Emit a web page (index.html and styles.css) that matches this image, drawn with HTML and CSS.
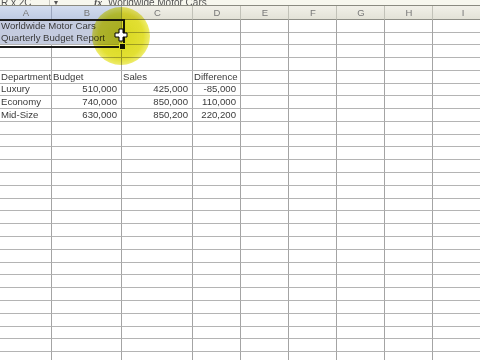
FILE: index.html
```html
<!DOCTYPE html>
<html>
<head>
<meta charset="utf-8">
<link rel="stylesheet" href="styles.css">
</head>
<body>
<div class="fbar">
  <span class="namebox">R x 2C</span>
  <span class="arrow">▾</span>
  <span class="fx">fx</span>
  <span class="ftext">Worldwide Motor Cars</span>
</div>
<div class="sheet">
  <div class="row head">
    <i class="hsel">A</i><i class="hsel">B</i><i>C</i><i>D</i><i>E</i><i>F</i><i>G</i><i>H</i><i>I</i>
  </div>
  <div class="row"><i class="sel txt">Worldwide Motor Cars</i><i class="sel"></i><i></i><i></i><i></i><i></i><i></i><i></i><i></i></div>
  <div class="row"><i class="sel txt">Quarterly Budget Report</i><i class="sel"></i><i></i><i></i><i></i><i></i><i></i><i></i><i></i></div>
  <div class="row"><i></i><i></i><i></i><i></i><i></i><i></i><i></i><i></i><i></i></div>
  <div class="row"><i></i><i></i><i></i><i></i><i></i><i></i><i></i><i></i><i></i></div>
  <div class="row"><i>Department</i><i>Budget</i><i>Sales</i><i>Difference</i><i></i><i></i><i></i><i></i><i></i></div>
  <div class="row"><i>Luxury</i><i class="num">510,000</i><i class="num">425,000</i><i class="num">-85,000</i><i></i><i></i><i></i><i></i><i></i></div>
  <div class="row"><i>Economy</i><i class="num">740,000</i><i class="num">850,000</i><i class="num">110,000</i><i></i><i></i><i></i><i></i><i></i></div>
  <div class="row"><i>Mid-Size</i><i class="num">630,000</i><i class="num">850,200</i><i class="num">220,200</i><i></i><i></i><i></i><i></i><i></i></div>
  <div class="row"><i></i><i></i><i></i><i></i><i></i><i></i><i></i><i></i><i></i></div>
  <div class="row"><i></i><i></i><i></i><i></i><i></i><i></i><i></i><i></i><i></i></div>
  <div class="row"><i></i><i></i><i></i><i></i><i></i><i></i><i></i><i></i><i></i></div>
  <div class="row"><i></i><i></i><i></i><i></i><i></i><i></i><i></i><i></i><i></i></div>
  <div class="row"><i></i><i></i><i></i><i></i><i></i><i></i><i></i><i></i><i></i></div>
  <div class="row"><i></i><i></i><i></i><i></i><i></i><i></i><i></i><i></i><i></i></div>
  <div class="row"><i></i><i></i><i></i><i></i><i></i><i></i><i></i><i></i><i></i></div>
  <div class="row"><i></i><i></i><i></i><i></i><i></i><i></i><i></i><i></i><i></i></div>
  <div class="row"><i></i><i></i><i></i><i></i><i></i><i></i><i></i><i></i><i></i></div>
  <div class="row"><i></i><i></i><i></i><i></i><i></i><i></i><i></i><i></i><i></i></div>
  <div class="row"><i></i><i></i><i></i><i></i><i></i><i></i><i></i><i></i><i></i></div>
  <div class="row"><i></i><i></i><i></i><i></i><i></i><i></i><i></i><i></i><i></i></div>
  <div class="row"><i></i><i></i><i></i><i></i><i></i><i></i><i></i><i></i><i></i></div>
  <div class="row"><i></i><i></i><i></i><i></i><i></i><i></i><i></i><i></i><i></i></div>
  <div class="row"><i></i><i></i><i></i><i></i><i></i><i></i><i></i><i></i><i></i></div>
  <div class="row"><i></i><i></i><i></i><i></i><i></i><i></i><i></i><i></i><i></i></div>
  <div class="row"><i></i><i></i><i></i><i></i><i></i><i></i><i></i><i></i><i></i></div>
  <div class="row"><i></i><i></i><i></i><i></i><i></i><i></i><i></i><i></i><i></i></div>
  <div class="row"><i></i><i></i><i></i><i></i><i></i><i></i><i></i><i></i><i></i></div>

  <div class="selbox"></div>
  <div class="handle"></div>
  <div class="glow"></div>
  <svg class="cursor" width="14" height="14" viewBox="0 0 14 14">
    <path d="M5 1h4v4h4v4h-4v4h-4v-4h-4v-4h4z" fill="#fff" stroke="#000" stroke-width="1"/>
  </svg>
</div>
</body>
</html>
```

FILE: styles.css
```css
html, body {
  margin: 0;
  padding: 0;
  background: #fff;
  overflow: hidden;
}
body {
  width: 480px;
  height: 360px;
  font-family: "Liberation Sans", Arial, sans-serif;
}
.fbar {
  height: 6px;
  box-sizing: border-box;
  border-bottom: 1px solid #8a8a80;
  background: #f7f7ee;
  overflow: hidden;
  display: flex;
  align-items: flex-end;
  font-size: 10px;
  line-height: 10px;
  color: #555;
  white-space: nowrap;
}
.fbar span {
  margin-bottom: -3px;
}
.namebox {
  width: 48px;
  padding-left: 1px;
  border-right: 1px solid #c8c8c0;
}
.arrow {
  width: 40px;
  padding-left: 4px;
  font-size: 8px;
}
.fx {
  width: 14px;
  font-style: italic;
  font-weight: bold;
  font-family: "Liberation Serif", serif;
}
.sheet {
  position: relative;
  font-size: 9.6px;
  color: #3a3a3a;
}
.row {
  display: grid;
  grid-template-columns: 52px 70px 71px 48px 48px 48px 48px 48px 60px;
  height: 12.8px;
}
.row i {
  font-style: normal;
  box-sizing: border-box;
  border-right: 1px solid #a4a4a4;
  border-bottom: 1px solid #b4b4b4;
  white-space: nowrap;
  overflow: visible;
  line-height: 12px;
  padding-left: 1px;
}
.row i.num {
  text-align: right;
  padding-right: 4px;
}
.row.head {
  height: 13.5px;
  background: linear-gradient(#f1f0e8, #e2e1d6);
  color: #777;
  font-size: 9.5px;
}
.row.head i {
  text-align: center;
  line-height: 13px;
  border-bottom: 1px solid #8e8e86;
  border-right: 1px solid #c2c2b8;
}
.row.head i.hsel {
  background: linear-gradient(#d3ddef, #bfcbe3);
  border-right-color: #9ba6be;
}
.row i.sel {
  background: #c4cbdf;
  position: relative;
  z-index: 1;
}
.row i.sel.txt {
  z-index: 2;
  border-right-color: transparent;
}
.selbox {
  position: absolute;
  left: -2px;
  top: 12.5px;
  width: 123px;
  height: 25px;
  border: 2px solid #1c1c1c;
  z-index: 3;
  pointer-events: none;
}
.handle {
  position: absolute;
  left: 119px;
  top: 36.5px;
  width: 5px;
  height: 5px;
  background: #111;
  border: 1px solid #fff;
  z-index: 4;
}
.glow {
  position: absolute;
  left: 92px;
  top: 1px;
  width: 58px;
  height: 58px;
  border-radius: 50%;
  background: radial-gradient(circle, rgba(215,215,30,1) 0%, rgba(225,222,40,0.95) 55%, rgba(240,238,80,0.6) 82%, rgba(250,250,200,0) 100%);
  mix-blend-mode: multiply;
  z-index: 5;
}
.cursor {
  position: absolute;
  left: 114px;
  top: 22px;
  z-index: 6;
}
```
